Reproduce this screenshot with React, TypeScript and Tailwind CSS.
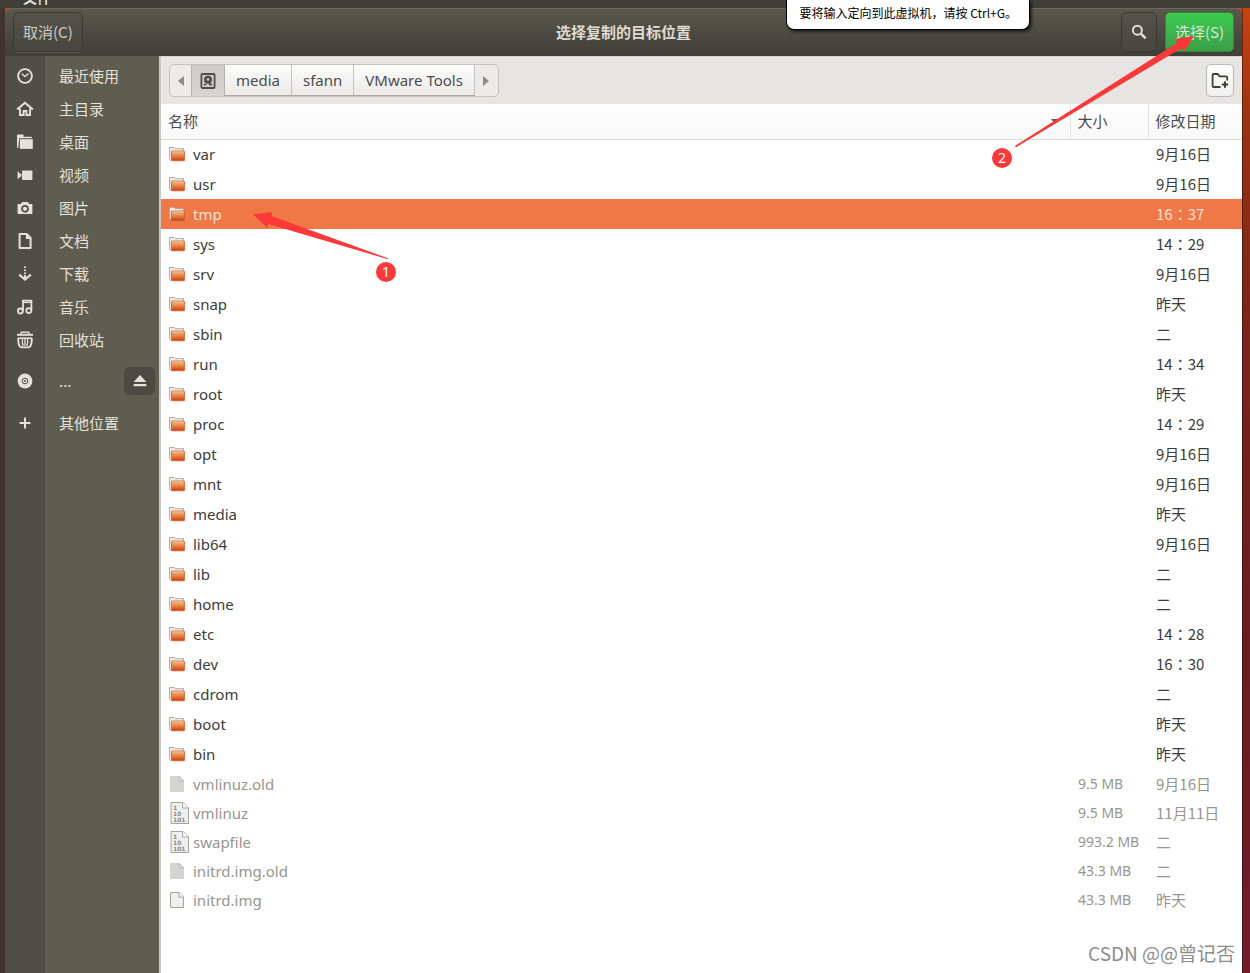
import React from 'react';

const places = [
  { name: '最近使用', icon: RecentIcon },
  { name: '主目录', icon: HomeIcon },
  { name: '桌面', icon: DesktopIcon },
  { name: '视频', icon: VideoIcon },
  { name: '图片', icon: CameraIcon },
  { name: '文档', icon: DocumentIcon },
  { name: '下载', icon: DownloadIcon },
  { name: '音乐', icon: MusicIcon },
  { name: '回收站', icon: TrashIcon }
];

const folders = [
  { name: 'var', date: '9月16日' },
  { name: 'usr', date: '9月16日' },
  { name: 'tmp', date: '16：37' },
  { name: 'sys', date: '14：29' },
  { name: 'srv', date: '9月16日' },
  { name: 'snap', date: '昨天' },
  { name: 'sbin', date: '二' },
  { name: 'run', date: '14：34' },
  { name: 'root', date: '昨天' },
  { name: 'proc', date: '14：29' },
  { name: 'opt', date: '9月16日' },
  { name: 'mnt', date: '9月16日' },
  { name: 'media', date: '昨天' },
  { name: 'lib64', date: '9月16日' },
  { name: 'lib', date: '二' },
  { name: 'home', date: '二' },
  { name: 'etc', date: '14：28' },
  { name: 'dev', date: '16：30' },
  { name: 'cdrom', date: '二' },
  { name: 'boot', date: '昨天' },
  { name: 'bin', date: '昨天' }
];

const files = [
  { name: 'vmlinuz.old', size: '9.5 MB', date: '9月16日', icon: LinkFileIcon },
  { name: 'vmlinuz', size: '9.5 MB', date: '11月11日', icon: BinaryFileIcon },
  { name: 'swapfile', size: '993.2 MB', date: '二', icon: BinaryFileIcon },
  { name: 'initrd.img.old', size: '43.3 MB', date: '二', icon: LinkFileIcon },
  { name: 'initrd.img', size: '43.3 MB', date: '昨天', icon: FileIcon }
];

const selected = 'tmp';

function RecentIcon() {
  return (
    <svg width="18" height="18" viewBox="0 0 18 18" fill="none" stroke="currentColor">
      <circle cx="9" cy="9" r="6.9" strokeWidth="1.9" />
      <path d="M5.8 6.8 9 9.6l3.6-3.2" strokeWidth="1.3" />
    </svg>
  );
}

function HomeIcon() {
  return (
    <svg width="18" height="18" viewBox="0 0 18 18" fill="none" stroke="currentColor">
      <path d="M1.2 9.4 9 2.8l7.8 6.6" strokeWidth="2.1" />
      <path d="M4 8.6v6.4h3.6v-4h2.8v4H14V8.6" strokeWidth="1.9" />
    </svg>
  );
}

function DesktopIcon() {
  return (
    <svg width="18" height="18" viewBox="0 0 18 18" fill="currentColor">
      <path d="M1 2.5C1 2 1.4 1.6 2 1.6h4.6c.6 0 1 .4 1 .9v1.2h7.6c.4 0 .7.3.7.8v.7H3.2L2.2 15H1.8c-.5 0-.8-.3-.8-.8z" />
      <path d="M3.8 6.2h13v9.7h-13z" />
    </svg>
  );
}

function VideoIcon() {
  return (
    <svg width="18" height="18" viewBox="0 0 18 18" fill="currentColor">
      <rect x="6" y="4.4" width="10.4" height="9.6" rx="1" />
      <path d="M1.6 5.2v8L5.4 10V8.4z" />
    </svg>
  );
}

function CameraIcon() {
  return (
    <svg width="18" height="18" viewBox="0 0 18 18">
      <path fill="currentColor" d="M6 3h6l1 2h2.4c.6 0 1 .4 1 1v8c0 .6-.4 1-1 1H2.6c-.6 0-1-.4-1-1V6c0-.6.4-1 1-1H5z" />
      <circle cx="9" cy="9.8" r="3" fill="none" stroke="#4f4f47" strokeWidth="1.7" />
    </svg>
  );
}

function DocumentIcon() {
  return (
    <svg width="18" height="18" viewBox="0 0 18 18">
      <path d="M3.6 2.1h7.2l3.8 3.8v10.1h-11z" fill="none" stroke="currentColor" strokeWidth="2" strokeLinejoin="round" />
      <path d="M10 2v5h5z" fill="currentColor" />
    </svg>
  );
}

function DownloadIcon() {
  return (
    <svg width="18" height="18" viewBox="0 0 18 18" fill="none" stroke="currentColor">
      <path d="M9 1.4v1.6M9 4.4V6M9 7.4V9M9 10v4" strokeWidth="2" />
      <path d="m3.2 9.6 5.8 5 5.8-5" strokeWidth="2.2" />
    </svg>
  );
}

function MusicIcon() {
  return (
    <svg width="18" height="18" viewBox="0 0 18 18" fill="none" stroke="currentColor">
      <path d="M7 13V2.7h8.4V12" strokeWidth="1.8" />
      <path d="M7 4.4h8.4" strokeWidth="1.4" />
      <circle cx="4.4" cy="13" r="2.5" strokeWidth="1.9" />
      <circle cx="12.8" cy="12.6" r="2.5" strokeWidth="1.9" />
    </svg>
  );
}

function TrashIcon() {
  return (
    <svg width="18" height="18" viewBox="0 0 18 18" fill="none" stroke="currentColor">
      <path d="M4.6 3 5.4 1.3h7.2l.8 1.7" strokeWidth="1.4" />
      <path d="M1 3.8h16" strokeWidth="2" />
      <path d="M2 7.2h14" strokeWidth="1.6" />
      <path d="M2.3 7c-.2 4 .4 7 1.8 8.6.4.5 1 .8 1.7.8h6.4c.7 0 1.300-.3 1.700-.8C15.300 14 15.900 11 15.700 7" strokeWidth="1.9" />
      <path d="M6.400 8c-.3 2.600 0 4.800.7 7M9 8v7M11.600 8c.3 2.600 0 4.800-.7 7" strokeWidth="1.3" />
    </svg>
  );
}

function DiscIcon() {
  return (
    <svg width="18" height="18" viewBox="0 0 18 18">
      <circle cx="9" cy="9" r="7.4" fill="currentColor" />
      <circle cx="9" cy="9" r="2.8" fill="none" stroke="#4f4f47" strokeWidth="1" />
      <circle cx="9" cy="9" r="1" fill="#4f4f47" />
    </svg>
  );
}

function PlusIcon() {
  return (
    <svg width="18" height="18" viewBox="0 0 18 18" fill="none" stroke="currentColor">
      <path d="M9 3.600v10.800M3.600 9h10.800" strokeWidth="2" />
    </svg>
  );
}

function DiskIcon() {
  return (
    <svg width="16" height="16" viewBox="0 0 16 16">
      <rect x="1.400" y="1" width="13.200" height="14" rx="1" fill="none" stroke="currentColor" strokeWidth="1.800" />
      <circle cx="8" cy="6.800" r="4" fill="currentColor" />
      <circle cx="8" cy="6.600" r="1.300" fill="#d2d1d0" />
      <path d="m8.400 7.600 4.400 4.800H9.600L7.200 8.600z" fill="currentColor" />
      <path d="M3.800 10.800h2.600v1.600H3.800z" fill="currentColor" />
    </svg>
  );
}

function FolderIcon() {
  return (
    <svg width="16" height="16" viewBox="0 0 17 16">
      <defs>
        <linearGradient id="folder" x1="0" y1="0" x2="0" y2="1">
          <stop offset="0" stopColor="#f3c090" />
          <stop offset="0.5" stopColor="#e58443" />
          <stop offset="1" stopColor="#cf3a12" />
        </linearGradient>
      </defs>
      <path d="M.6 13.4V1.1h5l1 1.200h8.800v3" fill="#f1efed" stroke="#a9a6a2" />
      <path d="M.6 14.300h2" stroke="#a9a6a2" />
      <rect x="2.600" y="4.800" width="13.800" height="10.400" rx="0.600" fill="url(#folder)" stroke="#d5602d" strokeWidth="0.900" />
      <path d="M3.400 5.700h12.200" stroke="#f3c79c" strokeWidth="0.700" />
    </svg>
  );
}

function FileIcon() {
  return (
    <svg width="16" height="18" viewBox="0 0 16 18">
      <path d="M1.5 1.5h8.600l4.400 4.400v10.600h-13z" fill="#efefee" stroke="#a3a3a0" />
      <path d="M10 1.5V6h4.500" fill="#fff" stroke="#a3a3a0" />
    </svg>
  );
}

function LinkFileIcon() {
  return (
    <svg width="16" height="18" viewBox="0 0 16 18">
      <path d="M1 1h9.400L15 5.600V17H1z" fill="#d4d4d1" />
      <path d="M10 1.5V6h4.500z" fill="#ececea" stroke="#b2b2ae" />
    </svg>
  );
}

function BinaryFileIcon() {
  return (
    <svg width="20" height="24" viewBox="0 0 20 24" className="ml-px">
      <path d="M1 1.5h12l5.500 5.500v15.500H1z" fill="#efefee" stroke="#a3a3a0" />
      <path d="M12.600 1.500V7h5.600" fill="#fff" stroke="#a3a3a0" />
      <g fill="#8a8a87" fontFamily="DejaVu Sans" fontWeight="700" fontSize="6">
        <text x="3" y="8.500">1</text>
        <text x="3" y="14.500">10</text>
        <text x="3" y="20.500">101</text>
      </g>
    </svg>
  );
}

function HeaderBar() {
  return (
    <header className="grid h-12 grid-cols-[1fr_auto_1fr] items-center rounded-t-md border-t border-[#6a685c] bg-linear-to-b from-[#5a584c] to-[#3f3e38] px-2 pb-px text-[#dfdbd2]">
      <button className="h-10 justify-self-start rounded-[5px] border border-[#3a3934] bg-linear-to-b from-[#54524a] to-[#47463f] px-[9px] text-[#cfccc3] shadow-[0_1px_0_#5a594f]">
        取消(C)
      </button>
      <h1 className="font-bold">选择复制的目标位置</h1>
      <div className="flex gap-2 justify-self-end">
        <button aria-label="搜索" className="flex h-10 w-9 items-center justify-center rounded-[5px] border border-[#3a3934] bg-linear-to-b from-[#54524a] to-[#47463f]">
          <svg width="16" height="16" viewBox="0 0 16 16" fill="none" stroke="currentColor">
            <circle cx="6.400" cy="6.200" r="4.500" strokeWidth="2" />
            <path d="m9.800 9.600 4.800 4.800" strokeWidth="2.600" />
          </svg>
        </button>
        <button className="h-10 rounded-[5px] border border-[#2f8a3c] bg-linear-to-b from-[#3ecb51] to-[#3a9f48] px-[9px] text-[#d6e8d2]">
          选择(S)
        </button>
      </div>
    </header>
  );
}

function Sidebar() {
  return (
    <nav className="w-[154px] shrink-0 bg-[linear-gradient(to_right,#4f4f47_39px,#444540_39px,#444540_40px,#5f5d50_40px)] pt-[3px] text-[#e4e1da]">
      <ul>
        {places.map((place) => (
          <li key={place.name}>
            <a href="#" className="flex h-[33px] items-center">
              <span className="flex w-10 justify-center">
                <place.icon />
              </span>
              <span className="pl-[14px]">{place.name}</span>
            </a>
          </li>
        ))}
        <li className="my-2 flex h-[34px] items-center pr-1">
          <a href="#" className="flex flex-1 items-center">
            <span className="flex w-10 justify-center">
              <DiscIcon />
            </span>
            <span className="pl-[14px]">...</span>
          </a>
          <button aria-label="弹出" className="flex h-7 w-[31px] items-center justify-center rounded-md border border-[#49483f] bg-[#4c4b43]">
            <svg width="14" height="14" viewBox="0 0 14 14" fill="currentColor">
              <path d="M7 1 13.400 8H.600zM.600 10h12.800v2.200H.600z" />
            </svg>
          </button>
        </li>
        <li>
          <a href="#" className="flex h-[33px] items-center">
            <span className="flex w-10 justify-center">
              <PlusIcon />
            </span>
            <span className="pl-[14px]">其他位置</span>
          </a>
        </li>
      </ul>
    </nav>
  );
}

function PathBar() {
  return (
    <div className="flex h-12 items-center justify-between border-t border-[#d6d4d1] bg-[#e6e5e3] px-2">
      <div className="flex h-[33px] rounded-[5px] border border-[#c4c2bf] bg-[#ecebea] font-['Noto_Sans'] text-[#4c4c4c]">
        <button aria-label="后退" className="flex w-[21px] items-center justify-center text-[#8f8b86]">
          <svg width="6" height="10" viewBox="0 0 6 10" fill="currentColor">
            <path d="M6 0v10L0 5z" />
          </svg>
        </button>
        <button aria-label="/" className="flex w-[34px] items-center justify-center border-x border-[#b4b2af] bg-linear-to-b from-[#cbcac9] to-[#d6d5d4]">
          <DiskIcon />
        </button>
        {['media', 'sfann', 'VMware Tools'].map((name) => (
          <button key={name} className="border-r border-b border-[#c4c2bf] border-b-[#a9a7a4] bg-linear-to-b from-[#fcfcfc] to-[#ebeae9] px-[11px]">
            {name}
          </button>
        ))}
        <button aria-label="前进" className="flex w-[23px] items-center justify-center text-[#8f8b86]">
          <svg width="6" height="10" viewBox="0 0 6 10" fill="currentColor">
            <path d="M0 0v10l6-5z" />
          </svg>
        </button>
      </div>
      <button aria-label="新建文件夹" className="flex h-[33px] w-7 items-center justify-center rounded-[5px] border border-[#b9b7b4] bg-linear-to-b from-white to-[#f0efee] text-[#3f3f3f]">
        <svg width="18" height="18" viewBox="0 0 18 18" className="shrink-0" fill="none" stroke="currentColor" strokeWidth="1.800">
          <path d="M9.600 15H2.600c-.6 0-1-.4-1-1V3c0-.6.4-1 1-1h4l2 2.400h6.600c.6 0 1 .4 1 1v3" />
          <path d="M14 9.400v6.400M10.800 12.600h6.400" strokeWidth="2" />
        </svg>
      </button>
    </div>
  );
}

function FileTable() {
  return (
    <table className="w-full text-left text-[#3c3c3c]">
      <thead className="bg-linear-to-b from-white to-[#f8f8f8]">
        <tr className="h-[35px] border-b border-[#dedddb] text-[#4c4c4c]">
          <th className="px-[7px] font-normal">
            <div className="flex items-center justify-between">
              名称
              <svg width="8" height="5" viewBox="0 0 8 5" className="mr-1" fill="#5c5c5c">
                <path d="M0 0h8L4 5z" />
              </svg>
            </div>
          </th>
          <th className="w-[78px] border-l border-[#e3e2e0] px-[7px] font-normal">大小</th>
          <th className="w-[94px] border-l border-[#e3e2e0] px-[7px] font-normal">修改日期</th>
        </tr>
      </thead>
      <tbody>
        {folders.map((folder) => (
          <tr key={folder.name} className={folder.name === selected ? 'h-[30px] bg-[#f07746] text-[#fbe3d8]' : 'h-[30px]'}>
            <td className="px-2">
              <div className="flex items-center font-['Noto_Sans']">
                <span className="w-6">
                  <FolderIcon />
                </span>
                {folder.name}
              </div>
            </td>
            <td />
            <td className="px-2 font-['Noto_Sans_CJK_TC']">{folder.date}</td>
          </tr>
        ))}
      </tbody>
      <tbody className="text-[#98958f]">
        {files.map((file) => (
          <tr key={file.name} className="h-[29px]">
            <td className="px-2">
              <div className="flex items-center font-['Noto_Sans']">
                <span className="w-6">
                  <file.icon />
                </span>
                {file.name}
              </div>
            </td>
            <td className="px-2 font-['Noto_Sans'] text-sm whitespace-nowrap">{file.size}</td>
            <td className="px-2 font-['Noto_Sans_CJK_TC']">{file.date}</td>
          </tr>
        ))}
      </tbody>
    </table>
  );
}

function Annotations() {
  return (
    <div className="pointer-events-none">
      <svg width="136" height="50" viewBox="0 0 136 50" className="absolute top-[211px] left-[252px]">
        <path d="M1 3.400 20 1l-.6 4L135.800 47.200v1L16.400 13l-1.200 3.800z" fill="#fd3838" />
      </svg>
      <span className="absolute top-[262px] left-[376px] size-5 rounded-full bg-[#fd3838] text-center font-['Noto_Sans'] text-sm leading-5 text-white">1</span>
      <svg width="182" height="114" viewBox="0 0 182 114" className="absolute top-[34px] right-[54px]">
        <path d="m180 2-19.500 3 2.700 3.800L1 111.800l.8 1.600L167.700 14l2.300 4z" fill="#fd3838" />
      </svg>
      <span className="absolute top-[148px] right-[238px] size-5 rounded-full bg-[#fd3838] text-center font-['Noto_Sans'] text-sm leading-5 text-white">2</span>
    </div>
  );
}

export default function App() {
  return (
    <div className="relative flex min-h-screen flex-col overflow-hidden bg-[#433232] font-['Noto_Sans_CJK_SC',sans-serif] text-[15px] leading-5">
      <div className="flex h-2 items-end overflow-hidden bg-[#3f3e39] pb-px pl-[23px] text-sm font-bold text-[#dfdbd2]">
        <span>文件</span>
      </div>
      <div className="flex flex-1 bg-[linear-gradient(#c8430f,#9a3212_12%,#7c2418_32%,#6b1a20_65%,#741a2a)]">
        <div className="w-[5px] shrink-0 bg-[#433232]" />
        <div className="flex min-w-0 flex-1 flex-col">
          <HeaderBar />
          <div className="flex flex-1">
            <Sidebar />
            <main className="min-w-0 flex-1 border-l-2 border-[#c9c7c4] bg-white">
              <PathBar />
              <FileTable />
            </main>
          </div>
        </div>
        <div className="w-2 shrink-0 border-l border-black/40" />
      </div>
      <div className="absolute top-0 right-[220px] rounded-b-lg border border-t-0 border-black bg-white px-3 pt-[3px] pb-[6px] text-xs leading-5 text-black shadow-[2px_2px_3px_rgba(0,0,0,0.6)]">
        要将输入定向到此虚拟机，请按 Ctrl+G。
      </div>
      <Annotations />
      <div className="absolute right-[15px] bottom-[6px] text-[19px] leading-7 text-[#8c8c8c]">CSDN @@曾记否</div>
    </div>
  );
}
